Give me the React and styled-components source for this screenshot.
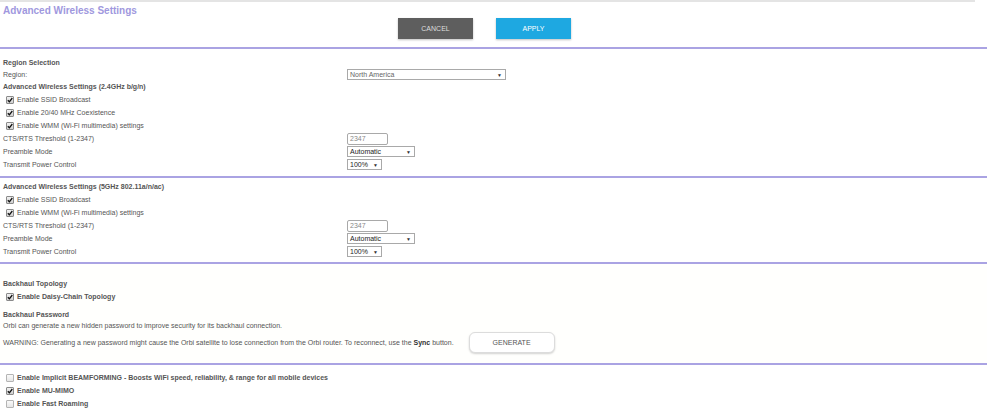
import styled, { createGlobalStyle } from 'styled-components'

const GlobalStyle = createGlobalStyle`
    body {
        margin: 0;
        background: #fff;
        font-family: "Liberation Sans", Arial, sans-serif;
        color: #555;
    }
`

const Page = styled.div`
    width: 987px;
`

const TopStrip = styled.div`
    width: 975px;
    height: 2px;
    background: #e4e4e4;
`

const Header = styled.header`
    padding-bottom: 8px;
    border-bottom: 2px solid #aaa3e3;
`

const Title = styled.h1`
    margin: 0;
    padding: 2px 0 0 3px;
    height: 14px;
    line-height: 14px;
    font-size: 10px;
    font-weight: bold;
    color: #a098de;
`

const ButtonBar = styled.div`
    display: flex;
    justify-content: center;
    gap: 23px;
    padding-right: 18px;
`

const Button = styled.button`
    width: 75px;
    height: 21px;
    border: none;
    font-family: inherit;
    font-size: 7px;
    padding: 0;
    color: ${p => p.$primary ? '#fff' : '#ddd'};
    background: ${p => p.$primary ? '#1ea8e1' : '#5e5e5e'};
    box-shadow: 0 1px 2px rgba(0, 0, 0, 0.25);
`

const Section = styled.section`
    padding: ${p => p.$pad || '0'};
    border-bottom: ${p => p.$last ? 'none' : '2px solid #aaa3e3'};
    background: ${p => p.$tint ? '#fffffd' : '#fff'};
`

const Row = styled.div`
    display: grid;
    grid-template-columns: 344px auto;
    align-items: center;
    height: ${p => p.$h || 13}px;
    padding-left: 3px;
    font-size: 7px;
`

const Heading = styled.div`
    display: flex;
    align-items: center;
    height: ${p => p.$h || 13}px;
    padding-left: 3px;
    font-size: 7px;
    font-weight: bold;
    color: #555;
    margin-top: ${p => p.$gap || 0}px;
`

const Text = styled.div`
    display: flex;
    align-items: center;
    height: ${p => p.$h || 13}px;
    padding-left: 3px;
    font-size: 7px;
    color: #555;
    white-space: nowrap;
`

const WarningRow = styled.div`
    display: flex;
    align-items: center;
    gap: 15px;
    height: 21px;
    margin-top: 1px;
    padding-left: 3px;
    font-size: 7px;
    white-space: nowrap;
    b {
        color: #333;
    }
`

const GenerateButton = styled.button`
    width: 86px;
    height: 21px;
    padding: 0;
    border: 1px solid #dcdcdc;
    border-radius: 6px;
    background: #fff;
    font-family: inherit;
    font-size: 7px;
    color: #555;
    box-shadow: 0 1px 2px rgba(0, 0, 0, 0.18);
`

const CheckRow = styled.label`
    display: flex;
    align-items: center;
    gap: 3px;
    height: 13px;
    padding-left: 6px;
    font-size: 7px;
    color: #555;
    font-weight: ${p => p.$strong ? 'bold' : 'normal'};
    white-space: nowrap;
`

const Box = styled.span`
    width: 6px;
    height: 6px;
    border: 1px solid ${p => p.$on ? '#8a8a8a' : '#b4b4b4'};
    border-radius: 1px;
    background: ${p => p.$on ? 'linear-gradient(#f2f2f2, #cfcfcf)' : 'linear-gradient(#fafafa, #e6e6e6)'};
    display: flex;
    align-items: center;
    justify-content: center;
    flex-shrink: 0;
`

const Select = styled.div`
    display: flex;
    align-items: center;
    justify-content: space-between;
    box-sizing: border-box;
    width: ${p => p.$w}px;
    height: 11px;
    padding: 0 3px 0 2px;
    border: 1px solid #a9a9a9;
    background: #fff;
    font-size: 7px;
    color: ${p => p.$dim ? '#666' : '#222'};
    span {
        font-size: 5px;
        color: #333;
    }
`

const Field = styled.div`
    box-sizing: border-box;
    width: 41px;
    height: 12px;
    padding-left: 2px;
    border: 1px solid #a9a9a9;
    border-radius: 2px;
    font-size: 7px;
    line-height: 10px;
    color: #888;
`

function Check({ on = true, strong, children }) {
    return (
        <CheckRow $strong={strong}>
            <Box $on={on}>
                {on && (
                    <svg width="6" height="6" viewBox="0 0 6 6">
                        <path d="M0.8 3.2 L2.4 4.8 L5.3 1" fill="none" stroke="#111" strokeWidth="1.3" />
                    </svg>
                )}
            </Box>
            {children}
        </CheckRow>
    )
}

function Dropdown({ w, dim, children }) {
    return (
        <Select $w={w} $dim={dim}>
            {children}
            <span>▼</span>
        </Select>
    )
}

function RadioBlock() {
    return (
        <>
            <Row>
                <span>CTS/RTS Threshold (1-2347)</span>
                <Field>2347</Field>
            </Row>
            <Row>
                <span>Preamble Mode</span>
                <Dropdown w={68}>Automatic</Dropdown>
            </Row>
            <Row>
                <span>Transmit Power Control</span>
                <Dropdown w={35}>100%</Dropdown>
            </Row>
        </>
    )
}

export default function App() {
    return (
        <Page>
            <GlobalStyle />
            <TopStrip />
            <Header>
                <Title>Advanced Wireless Settings</Title>
                <ButtonBar>
                    <Button>CANCEL</Button>
                    <Button $primary>APPLY</Button>
                </ButtonBar>
            </Header>

            <Section $pad="7px 0 5px">
                <Heading>Region Selection</Heading>
                <Row $h={11}>
                    <span>Region:</span>
                    <Dropdown w={159} dim>North America</Dropdown>
                </Row>
                <Heading>Advanced Wireless Settings (2.4GHz b/g/n)</Heading>
                <Check>Enable SSID Broadcast</Check>
                <Check>Enable 20/40 MHz Coexistence</Check>
                <Check>Enable WMM (Wi-Fi multimedia) settings</Check>
                <RadioBlock />
            </Section>

            <Section $pad="2px 0 4px">
                <Heading>Advanced Wireless Settings (5GHz 802.11a/n/ac)</Heading>
                <Check>Enable SSID Broadcast</Check>
                <Check>Enable WMM (Wi-Fi multimedia) settings</Check>
                <RadioBlock />
            </Section>

            <Section $pad="13px 0 10px" $tint>
                <Heading>Backhaul Topology</Heading>
                <Check strong>Enable Daisy-Chain Topology</Check>
                <Heading $h={11} $gap={6}>Backhaul Password</Heading>
                <Text $h={11}>Orbi can generate a new hidden password to improve security for its backhaul connection.</Text>
                <WarningRow>
                    <span>WARNING: Generating a new password might cause the Orbi satellite to lose connection from the Orbi router. To reconnect, use the <b>Sync</b> button.</span>
                    <GenerateButton>GENERATE</GenerateButton>
                </WarningRow>
            </Section>

            <Section $pad="6px 0 0" $last>
                <Check on={false} strong>Enable Implicit BEAMFORMING - Boosts WiFi speed, reliability, &amp; range for all mobile devices</Check>
                <Check strong>Enable MU-MIMO</Check>
                <Check on={false} strong>Enable Fast Roaming</Check>
            </Section>
        </Page>
    )
}
